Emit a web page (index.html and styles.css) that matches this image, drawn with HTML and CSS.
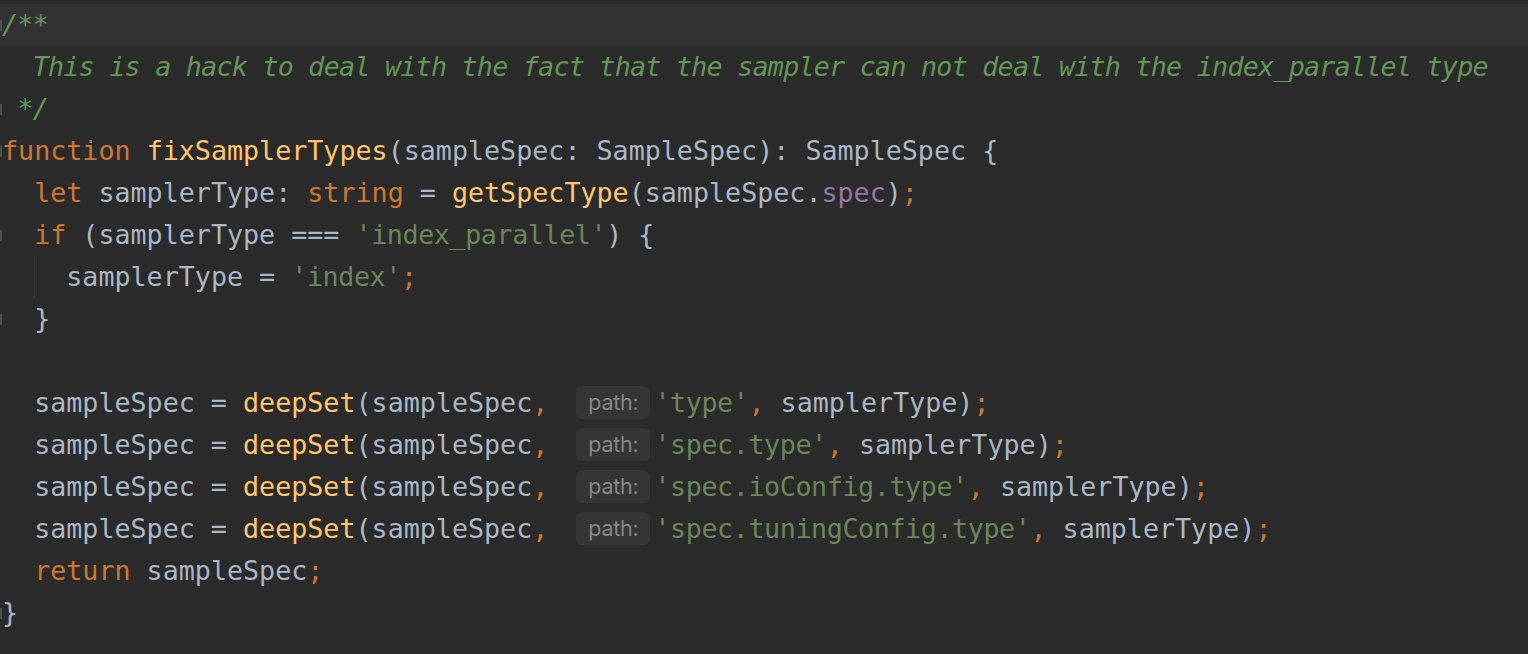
FILE: index.html
```html
<!DOCTYPE html>
<html>
<head>
<meta charset="utf-8">
<link rel="stylesheet" href="styles.css">
</head>
<body>
<div class="editor">
  <div class="line current"><span class="gut fold"></span><span class="code"><span class="doc">/**</span></span></div>
  <div class="line"><span class="gut"></span><span class="code"><span class="doc">  This is a hack to deal with the fact that the sampler can not deal with the index_parallel type</span></span></div>
  <div class="line"><span class="gut fold"></span><span class="code"><span class="doc"> */</span></span></div>
  <div class="line"><span class="gut fold"></span><span class="code"><span class="kw">function</span> <span class="fn">fixSamplerTypes</span>(sampleSpec: SampleSpec): SampleSpec {</span></div>
  <div class="line"><span class="gut"></span><span class="code">  <span class="kw">let</span> samplerType: <span class="kw">string</span> = <span class="fn">getSpecType</span>(sampleSpec.<span class="prop">spec</span>)<span class="kw">;</span></span></div>
  <div class="line"><span class="gut fold"></span><span class="code">  <span class="kw">if</span> (samplerType === <span class="str">'index_parallel'</span>) {</span></div>
  <div class="line"><span class="gut"></span><span class="code">  <span class="guide">  </span>samplerType = <span class="str">'index'</span><span class="kw">;</span></span></div>
  <div class="line"><span class="gut fold"></span><span class="code">  }</span></div>
  <div class="line"><span class="gut"></span><span class="code"> </span></div>
  <div class="line"><span class="gut"></span><span class="code">  sampleSpec = <span class="fn">deepSet</span>(sampleSpec<span class="kw">,</span> <span class="hint">path:</span><span class="str">'type'</span><span class="kw">,</span> samplerType)<span class="kw">;</span></span></div>
  <div class="line"><span class="gut"></span><span class="code">  sampleSpec = <span class="fn">deepSet</span>(sampleSpec<span class="kw">,</span> <span class="hint">path:</span><span class="str">'spec.type'</span><span class="kw">,</span> samplerType)<span class="kw">;</span></span></div>
  <div class="line"><span class="gut"></span><span class="code">  sampleSpec = <span class="fn">deepSet</span>(sampleSpec<span class="kw">,</span> <span class="hint">path:</span><span class="str">'spec.ioConfig.type'</span><span class="kw">,</span> samplerType)<span class="kw">;</span></span></div>
  <div class="line"><span class="gut"></span><span class="code">  sampleSpec = <span class="fn">deepSet</span>(sampleSpec<span class="kw">,</span> <span class="hint">path:</span><span class="str">'spec.tuningConfig.type'</span><span class="kw">,</span> samplerType)<span class="kw">;</span></span></div>
  <div class="line"><span class="gut"></span><span class="code">  <span class="kw">return</span> sampleSpec<span class="kw">;</span></span></div>
  <div class="line"><span class="gut fold"></span><span class="code">}</span></div>
</div>
</body>
</html>
```
FILE: styles.css
```css
html, body {
  margin: 0;
  padding: 0;
  background: #2b2b2b;
}

.editor {
  padding-top: 4px;
  font-family: "DejaVu Sans Mono", monospace;
  font-size: 26.7px;
  color: #a9b7c6;
}

.line {
  display: flex;
  height: 42px;
  line-height: 42px;
}

.line.current {
  background: #323232;
}

.gut {
  flex: none;
  width: 2px;
  display: flex;
  align-items: center;
}

.gut.fold::before {
  content: "";
  display: block;
  width: 2px;
  height: 11px;
  background: #4e4e4e;
}

.code {
  flex: none;
  white-space: pre;
}

.doc {
  color: #629755;
  font-style: italic;
  letter-spacing: -0.75px;
}

.kw {
  color: #cc7832;
}

.fn {
  color: #ffc66d;
}

.str {
  color: #6a8759;
  letter-spacing: -0.4px;
}

.prop {
  color: #9876aa;
}

.guide {
  display: inline-block;
  height: 42px;
  vertical-align: top;
  box-shadow: inset 1px 0 0 #3c3c3c;
}

.hint {
  display: inline-block;
  vertical-align: middle;
  width: 74px;
  height: 33px;
  line-height: 33px;
  margin: 0 4px 0 12px;
  border-radius: 6px;
  background: #353535;
  color: #868686;
  font-family: Inter, "Liberation Sans", sans-serif;
  font-size: 21.5px;
  text-align: center;
  letter-spacing: -0.2px;
  position: relative;
  top: -2px;
}
```
